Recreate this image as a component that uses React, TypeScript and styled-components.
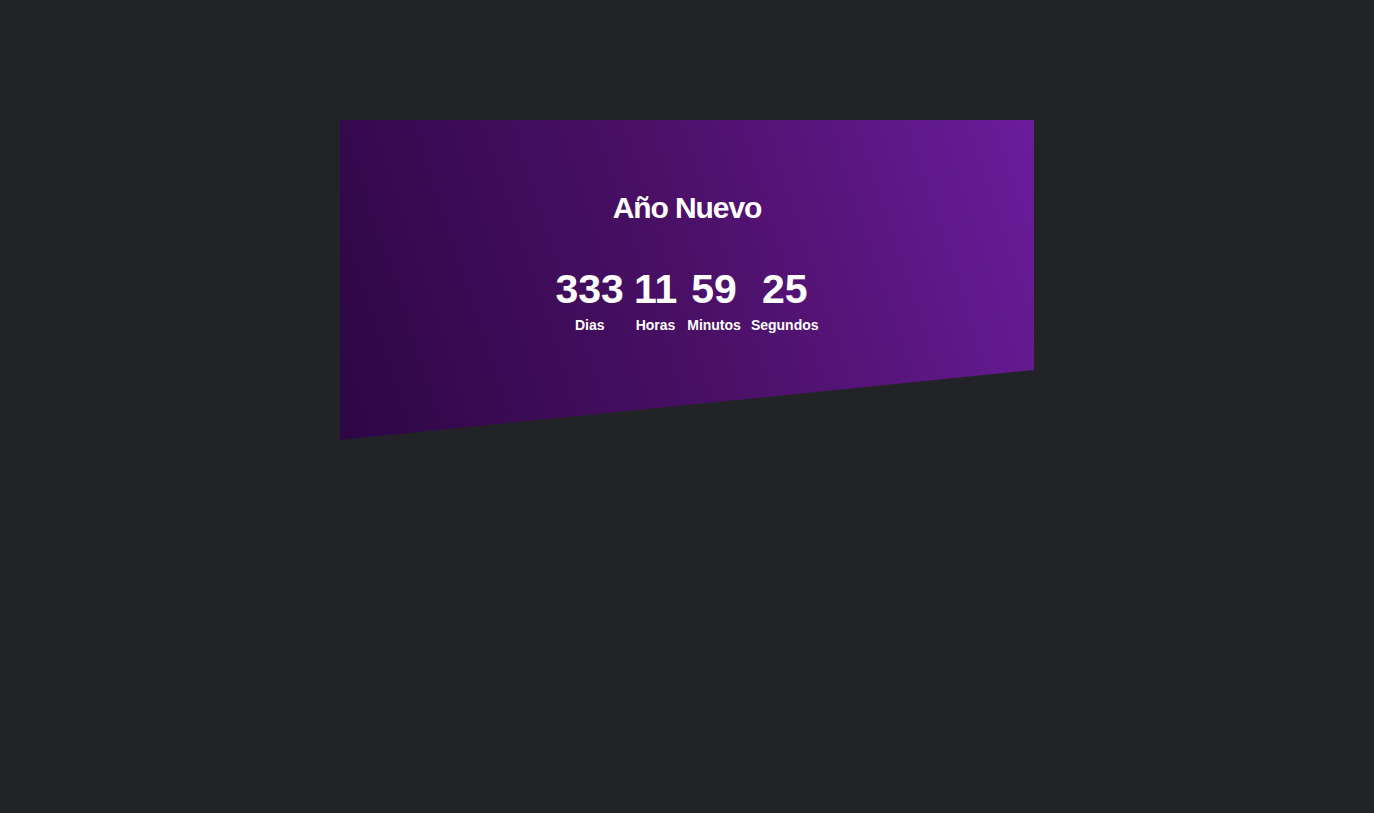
import React from "react";
import styled, { createGlobalStyle } from "styled-components";

const Global = createGlobalStyle`
  html, body {
    margin: 0;
    padding: 0;
    background: #212327;
    min-height: 100%;
  }
  body {
    font-family: "Liberation Sans", Arial, sans-serif;
    color: #ffffff;
  }
`;

const Page = styled.main`
  min-height: 813px;
  padding-top: 120px;
  box-sizing: border-box;
`;

const Card = styled.section`
  width: 694px;
  height: 320px;
  margin: 0 auto;
  box-sizing: border-box;
  padding-top: 68px;
  background: linear-gradient(72deg, #2d0645 0%, #4a1066 50%, #6b1c9b 100%);
  clip-path: polygon(0 0, 100% 0, 100% 78.1%, 0 100%);
  display: flex;
  flex-direction: column;
  align-items: center;
`;

const Title = styled.h1`
  margin: 0;
  font-family: "Liberation Sans", Arial, sans-serif;
  font-weight: 700;
  font-size: 30px;
  line-height: 40px;
  letter-spacing: -1.1px;
  color: #ffffff;
`;

const Countdown = styled.div`
  display: flex;
  gap: 10px;
  margin-top: 38px;
`;

const Unit = styled.div`
  display: flex;
  flex-direction: column;
  align-items: center;
  gap: 5px;
`;

const Value = styled.span`
  font-weight: 700;
  font-size: 41px;
  line-height: 46px;
`;

const Label = styled.span`
  font-weight: 700;
  font-size: 14px;
  line-height: 16px;
`;

const units = [
  { value: "333", label: "Dias" },
  { value: "11", label: "Horas" },
  { value: "59", label: "Minutos" },
  { value: "25", label: "Segundos" },
];

export default function App() {
  return (
    <>
      <Global />
      <Page>
        <Card>
          <Title>Año Nuevo</Title>
          <Countdown>
            {units.map((u) => (
              <Unit key={u.label}>
                <Value>{u.value}</Value>
                <Label>{u.label}</Label>
              </Unit>
            ))}
          </Countdown>
        </Card>
      </Page>
    </>
  );
}
